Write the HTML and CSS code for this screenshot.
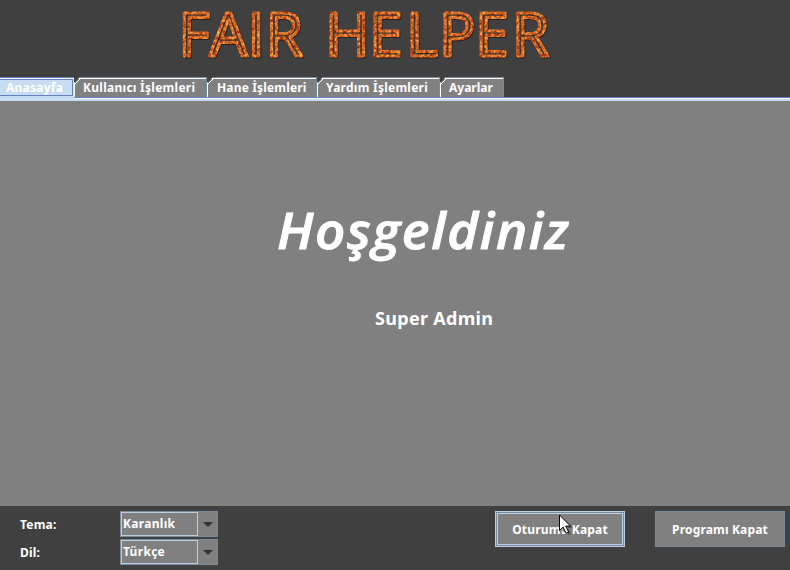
FILE: index.html
```html
<!DOCTYPE html>
<html lang="tr">
<head>
<meta charset="utf-8">
<title>Fair Helper</title>
<link rel="stylesheet" href="styles.css">
</head>
<body>
<div class="app">
  <header class="header">
    <svg class="logo" width="390" height="76" viewBox="172 0 390 76">
      <defs>
        <filter id="lava" x="-5%" y="-10%" width="110%" height="130%" color-interpolation-filters="sRGB">
          <feTurbulence type="fractalNoise" baseFrequency="0.35" numOctaves="2" seed="4" result="n"/>
          <feColorMatrix in="n" values="0.7 0 0 0 0.48  1.0 0 0 0 -0.08  0.5 0 0 0 -0.09  0 0 0 0 1" result="c"/>
          <feComposite in="c" in2="SourceAlpha" operator="in" result="t"/>
          <feDropShadow in="t" dx="0.6" dy="0.8" stdDeviation="0.7" flood-color="#200c06" flood-opacity="0.8"/>
        </filter>
      </defs>
      <text class="logo-text" filter="url(#lava)" y="55.5" x="178.6 209.6 247.8 265.8 315 325.3 369.3 406.3 439.3 475.3 512">FAIR HELPER</text>
    </svg>
  </header>
  <nav class="tabs">
    <div class="tab active t1"><span>Anasayfa</span></div>
    <div class="tab t2"><span>Kullanıcı İşlemleri</span></div>
    <div class="tab t3"><span>Hane İşlemleri</span></div>
    <div class="tab t4"><span>Yardım İşlemleri</span></div>
    <div class="tab t5"><span>Ayarlar</span></div>
  </nav>
  <main class="content">
    <h1 class="welcome">Hoşgeldiniz</h1>
    <p class="user">Super Admin</p>
  </main>
  <footer class="footer">
    <div class="settings">
      <span class="label">Tema:</span>
      <div class="combo"><span class="value">Karanlık</span><i class="arrow"></i></div>
      <span class="label">Dil:</span>
      <div class="combo"><span class="value">Türkçe</span><i class="arrow"></i></div>
    </div>
    <div class="actions">
      <button class="button focused">Oturumu Kapat</button>
      <button class="button">Programı Kapat</button>
    </div>
  </footer>
  <svg class="cursor" width="14" height="22" viewBox="0 0 14 22"><path class="cursor-shadow" d="M2 3v16l4-4 3 6 3-1-3-6h5z"/><path class="cursor-shape" d="M.5 1v15.5l3.6-3.4 3 6.2 2.6-1.2-3-6h4.8z"/></svg>
</div>
</body>
</html>
```
FILE: styles.css
```css
* { box-sizing: border-box; }
body { margin: 0; }
.app {
  position: relative;
  display: flex;
  flex-direction: column;
  width: 790px;
  height: 570px;
  overflow: hidden;
  background: #404040;
  color: #fff;
  font: bold 12px/16px "Noto Sans", sans-serif;
}
.header { height: 77px; padding-left: 172px; }
.logo { display: block; overflow: visible; }
.logo-text {
  font: 400 60px/1 "Open Sans", sans-serif;
  fill: #5b2e20;
  fill-opacity: .12;
  stroke: #d4561c;
  stroke-width: 3.2;
  stroke-linejoin: round;
}
.tabs {
  display: flex;
  height: 24px;
  border-bottom: 2px solid #c8ddf2;
  background: linear-gradient(#6382bf, #6382bf) 0 20px / 100% 1px no-repeat,
    linear-gradient(#fff, #fff) 0 21px / 100% 1px no-repeat;
}
.tab {
  height: 20px;
  padding: 2px 0 0 8px;
  white-space: nowrap;
  border-top: 1px solid #7a8a99;
  border-left: 1px solid #fff;
  border-right: 1px solid #7a8a99;
  background: linear-gradient(#fff, #fff) 0 0 / 100% 1px no-repeat, #808080;
  clip-path: polygon(6px 0, 100% 0, 100% 100%, 0 100%, 0 6px);
}
.tab::before {
  content: "";
  position: absolute;
  width: 7px;
  height: 7px;
  margin: -2px 0 0 -9px;
  background: linear-gradient(135deg, transparent 44%, #fff 45%, #fff 53%, transparent 54%);
}
.tab.t3::before { margin-left: -10px; }
.tab.active {
  height: 22px;
  padding: 2px 0 0 6px;
  border: 0;
  border-top: 1px solid #6382bf;
  background:
    linear-gradient(#fff, #fff) 0 0 / 100% 1px no-repeat,
    linear-gradient(#6382bf, #6382bf) 0 1px / 73px 1px no-repeat,
    linear-gradient(#6382bf, #6382bf) 0 17px / 73px 1px no-repeat,
    linear-gradient(#6382bf, #6382bf) 72px 1px / 1px 17px no-repeat,
    #c8ddf2;
  clip-path: none;
}
.tab.active::before { display: none; }
.t1 { width: 74px; letter-spacing: .25px; }
.t2 { width: 133px; letter-spacing: .27px; }
.t3 { width: 110px; padding-left: 9px; letter-spacing: .16px; }
.t4 { width: 123px; letter-spacing: .25px; }
.t5 { width: 64px; }
.content { height: 405px; background: #808080; }
.welcome {
  margin: 0;
  padding: 95px 0 0;
  width: 400px;
  margin-left: 277px;
  font: italic 600 50px/68px "Open Sans", sans-serif;
  letter-spacing: 1.5px;
  -webkit-text-stroke: .9px #fff;
  transform: scaleX(1.055);
  transform-origin: 0 0;
}
.user {
  margin: 0;
  padding: 41px 0 0 375px;
  font: bold 18px/26px "Noto Sans", sans-serif;
  letter-spacing: .3px;
}
.footer { display: flex; justify-content: space-between; height: 64px; padding: 5px 5px 0 20px; }
.settings { display: grid; grid-template-columns: 100px 98px; grid-template-rows: 26px 26px; row-gap: 2px; }
.label { align-self: center; padding-top: 2px; letter-spacing: .2px; }
.combo { display: flex; background: #808080; border: 1px solid #7a8a99; }
.value { width: 77px; height: 24px; padding: 3px 0 0 1px; border: 1px solid #b8cfe5; white-space: nowrap; letter-spacing: .3px; }
.arrow { width: 10px; height: 5px; margin: 10px 0 0 5px; background: #333; clip-path: polygon(0 0, 100% 0, 50% 100%); }
.actions { display: flex; gap: 30px; }
.button {
  width: 130px;
  height: 36px;
  padding: 1px 0 0;
  font: inherit;
  letter-spacing: .17px;
  color: #fff;
  white-space: nowrap;
  background: #808080;
  border: 1px solid #7a8a99;
}
.button.focused { border-color: #b8cfe5; box-shadow: inset 0 0 0 1px #7a8a99, inset 0 0 0 2px #b8cfe5; }
.cursor { position: absolute; left: 559px; top: 514px; }
.cursor-shape { fill: #fff; stroke: #000; }
.cursor-shadow { fill: #000; opacity: .3; }
```
